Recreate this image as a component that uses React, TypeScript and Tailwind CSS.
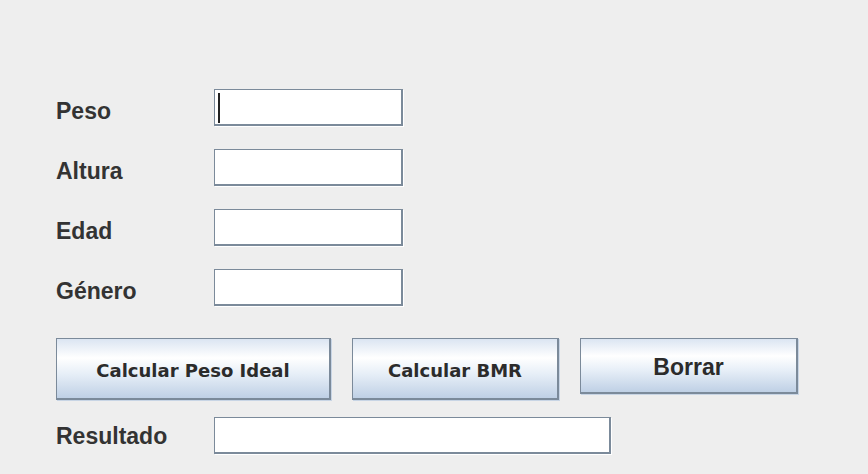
const label =
  "w-[158px] self-center text-[23px] leading-[28px] font-bold text-[#333333] [font-family:'Liberation_Sans',Arial,sans-serif]";
const field =
  "h-[37px] bg-white border border-[#7b8a9a] border-r-2 border-b-2 shadow-[1px_1px_0_#ffffff]";
const button =
  "flex items-center justify-center border border-[#7b8a9a] border-r-2 border-b-2 shadow-[1px_1px_0_#c8d5e5] bg-[linear-gradient(180deg,#dbe5f2_0%,#ffffff_32%,#e6eef7_60%,#bfd0e5_100%)] text-[#2b2b2b]";

function Row({ name, caret }: { name: string; caret?: boolean }) {
  return (
    <div className="flex items-start h-[38px]">
      <span className={label + " pt-[5px]"}>{name}</span>
      <div className={field + " w-[189px] relative"}>
        {caret && <div className="absolute left-[3px] top-[3px] h-[30px] w-[2px] bg-[#222]" />}
      </div>
    </div>
  );
}

export default function App() {
  return (
    <div className="w-[868px] h-[474px] bg-[#eeeeee] pl-[56px] pt-[89px] overflow-hidden">
      <div className="flex flex-col gap-[22px]">
        <Row name="Peso" caret />
        <Row name="Altura" />
        <Row name="Edad" />
        <Row name="Género" />
      </div>

      <div className="flex items-start gap-[21px] mt-[31px] [font-family:'DejaVu_Sans',Verdana,sans-serif] text-[18px] font-bold">
        <button className={button + " w-[275px] h-[62px] pt-[3px]"}>Calcular Peso Ideal</button>
        <button className={button + " w-[207px] h-[62px] pt-[3px]"}>Calcular BMR</button>
        <button
          className={
            button +
            " w-[218px] h-[56px] pt-[3px] text-[23px] [font-family:'Liberation_Sans',Arial,sans-serif]"
          }
        >
          Borrar
        </button>
      </div>

      <div className="flex items-start h-[38px] mt-[17px]">
        <span className={label}>Resultado</span>
        <div className={field + " w-[397px]"} />
      </div>
    </div>
  );
}
